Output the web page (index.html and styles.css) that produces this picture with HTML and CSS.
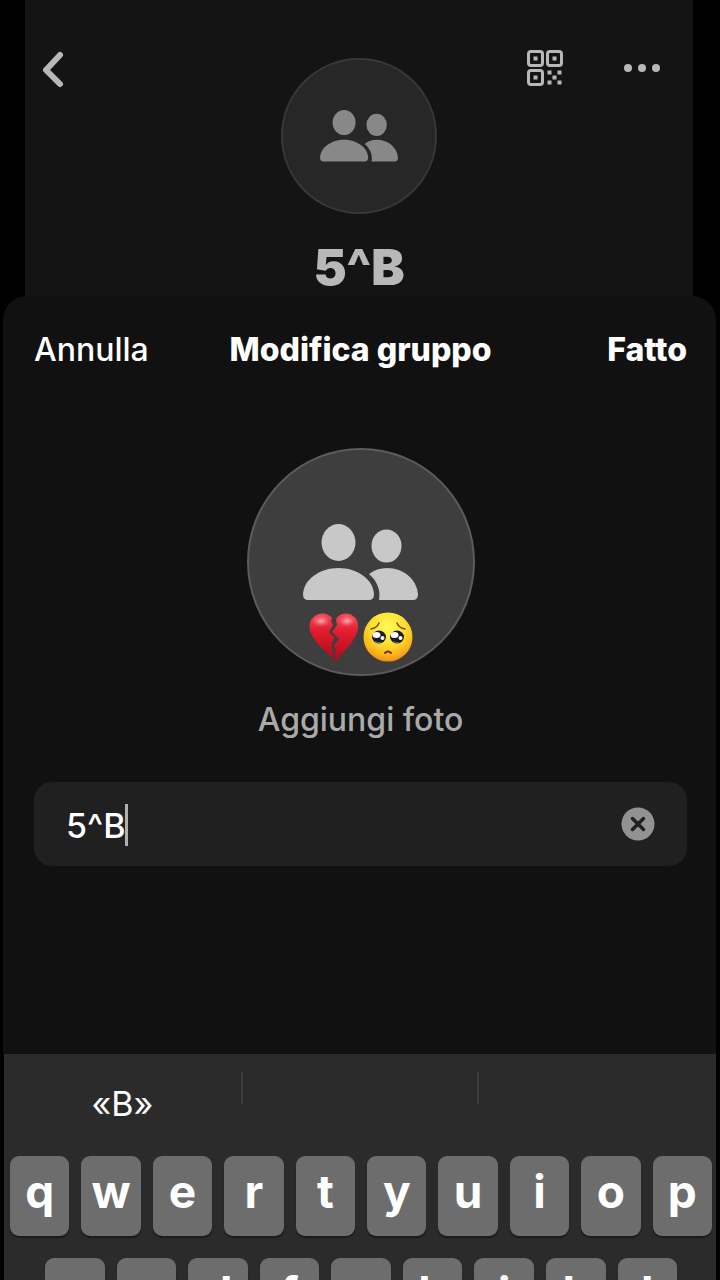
FILE: index.html
```
<!DOCTYPE html>
<html lang="it">
<head>
  <meta charset="UTF-8">
  <meta name="viewport" content="width=device-width, initial-scale=1.0">
  <title>Modifica gruppo</title>
  <link rel="stylesheet" href="styles.css">
</head>
<body>
  <!-- Group page behind the sheet -->
  <div class="group-page">
    <div class="group-header">
      <button class="icon-button" type="button" aria-label="Indietro">
        <svg width="24" height="40" viewBox="0 0 24 40"><path d="M19 5 5 20l14 14" fill="none" stroke="currentColor" stroke-width="6" stroke-linecap="round" stroke-linejoin="round"/></svg>
      </button>
      <div class="group-actions">
        <button class="icon-button" type="button" aria-label="Codice QR">
          <svg width="36" height="36" viewBox="0 0 36 36" fill="currentColor">
            <g fill="none" stroke="currentColor" stroke-width="3">
              <rect x="1.5" y="1.5" width="14" height="14" rx="2.5"/>
              <rect x="20.5" y="1.5" width="14" height="14" rx="2.5"/>
              <rect x="1.5" y="20.5" width="14" height="14" rx="2.5"/>
            </g>
            <path d="M6.500 6.500h4v4h-4zM25.500 6.500h4v4h-4zM6.500 25.500h4v4h-4zM20.500 20.500h4v4h-4zM30.500 20.500h4v4h-4zM25.500 25.500h4v4h-4zM20.500 30.500h4v4h-4zM30.500 30.500h4v4h-4z"/>
          </svg>
        </button>
        <button class="icon-button" type="button" aria-label="Altro">
          <svg width="36" height="36" viewBox="0 0 36 36" fill="currentColor"><circle cx="4" cy="18" r="4"/><circle cx="18" cy="18" r="4"/><circle cx="32" cy="18" r="4"/></svg>
        </button>
      </div>
    </div>
    <div class="group-avatar">
      <svg class="people" viewBox="0 0 115 76" fill="currentColor">
        <ellipse cx="35.500" cy="18.500" rx="17" ry="18.500"/>
        <ellipse cx="83.500" cy="22" rx="15" ry="16.500"/>
        <path d="M5 76Q0 76 0 70C1 55 17 44 35.500 44S70 55 71 70Q71 76 66 76Z"/>
        <path d="M66 50C71 46 77 44 84 44C101 44 114 56 115 70Q115 76 110 76H76C78 66 74 57 66 50Z"/>
      </svg>
    </div>
    <h1 class="group-name">5^B</h1>
  </div>

  <!-- Edit sheet -->
  <div class="sheet">
    <div class="sheet-header">
      <button class="text-button" type="button">Annulla</button>
      <h2>Modifica gruppo</h2>
      <button class="text-button done" type="button">Fatto</button>
    </div>
    <div class="photo">
      <div class="photo-circle">
        <svg class="people" viewBox="0 0 115 76" fill="currentColor">
          <ellipse cx="35.500" cy="18.500" rx="17" ry="18.500"/>
          <ellipse cx="83.500" cy="22" rx="15" ry="16.500"/>
          <path d="M5 76Q0 76 0 70C1 55 17 44 35.500 44S70 55 71 70Q71 76 66 76Z"/>
          <path d="M66 50C71 46 77 44 84 44C101 44 114 56 115 70Q115 76 110 76H76C78 66 74 57 66 50Z"/>
        </svg>
        <div class="stickers">
          <svg width="50" height="50" viewBox="0 0 50 50" role="img" aria-label="Cuore spezzato">
            <defs>
              <linearGradient id="heart" x1="0" y1="0" x2="0" y2="1"><stop offset="0" stop-color="#f4495a"/><stop offset=".4" stop-color="#e01c2e"/><stop offset="1" stop-color="#a90c1b"/></linearGradient>
              <radialGradient id="shine"><stop offset="0" stop-color="#ffb9bd" stop-opacity=".9"/><stop offset="1" stop-color="#ff7b87" stop-opacity="0"/></radialGradient>
            </defs>
            <path d="M23 6C19 1 11 0 6 4C-1 8 -1 17 4 25C8 33 18 40 25 47C26 43 24 39 23 37L23 31L26 26L20 20L24 13L22 9Z" fill="url(#heart)"/>
            <path d="M27 7C31 1 39 0 44 4C51 8 50 18 46 25C42 33 34 41 26 50C25 47 27 42 27 39L25 33L30 27L23 20L28 13Z" fill="url(#heart)"/>
            <ellipse cx="12" cy="9" rx="9" ry="6" fill="url(#shine)"/>
            <ellipse cx="38" cy="9" rx="9" ry="6" fill="url(#shine)"/>
          </svg>
          <svg width="50" height="50" viewBox="0 0 50 50" role="img" aria-label="Faccina supplichevole">
            <defs>
              <radialGradient id="face" cx=".5" cy=".3" r=".7"><stop offset="0" stop-color="#fff95e"/><stop offset=".5" stop-color="#ffe02f"/><stop offset=".85" stop-color="#fbae18"/><stop offset="1" stop-color="#ee8d10"/></radialGradient>
            </defs>
            <circle cx="25" cy="25" r="24.500" fill="url(#face)"/>
            <path d="M8 17Q14 16 16 11M34 11Q36 16 42 17" fill="none" stroke="#7a4a0a" stroke-width="1.500" stroke-linecap="round"/>
            <ellipse cx="16" cy="25" rx="7" ry="6.500" fill="#1c1a22"/>
            <ellipse cx="34" cy="25" rx="7" ry="6.500" fill="#1c1a22"/>
            <g fill="#fff">
              <ellipse cx="13.500" cy="23" rx="4" ry="3"/><circle cx="19.500" cy="26" r="2"/>
              <ellipse cx="31.500" cy="23" rx="4" ry="3"/><circle cx="37.500" cy="26" r="2"/>
            </g>
            <path d="M12 29.500q3 2 6 1M30 29.500q3 2 6 1" fill="none" stroke="#5d74a8"/>
            <path d="M22 41Q25 38 28 41" fill="none" stroke="#6b2d0c" stroke-width="2" stroke-linecap="round"/>
          </svg>
        </div>
      </div>
      <button class="text-button add-photo" type="button">Aggiungi foto</button>
    </div>
    <div class="name-field">
      <input type="text" value="5^B" aria-label="Nome del gruppo">
      <span class="caret"></span>
      <button class="icon-button" type="button" aria-label="Cancella testo">
        <svg width="34" height="34" viewBox="0 0 34 34"><circle cx="17" cy="17" r="16.500" fill="#929292"/><path d="m11.500 11.500 11 11m0-11-11 11" stroke="#202020" stroke-width="3.500" stroke-linecap="round"/></svg>
      </button>
    </div>
  </div>

  <!-- Keyboard -->
  <div class="keyboard">
    <div class="suggestions">
      <button type="button">«B»</button>
      <button type="button" aria-label="Suggerimento 2"></button>
      <button type="button" aria-label="Suggerimento 3"></button>
    </div>
    <div class="keys">
      <button type="button">q</button>
      <button type="button">w</button>
      <button type="button">e</button>
      <button type="button">r</button>
      <button type="button">t</button>
      <button type="button">y</button>
      <button type="button">u</button>
      <button type="button">i</button>
      <button type="button">o</button>
      <button type="button">p</button>
    </div>
    <div class="keys keys-middle">
      <button type="button">a</button>
      <button type="button">s</button>
      <button type="button">d</button>
      <button type="button">f</button>
      <button type="button">g</button>
      <button type="button">h</button>
      <button type="button">j</button>
      <button type="button">k</button>
      <button type="button">l</button>
    </div>
  </div>
</body>
</html>
```
FILE: styles.css
```
/* General Styles */
* {
  box-sizing: border-box;
}

body {
  margin: 0;
  height: 100vh;
  overflow: hidden;
  display: flex;
  flex-direction: column;
  background-color: #000;
  color: #fff;
  font-family: Inter, "Liberation Sans", sans-serif;
  font-size: 32px;
  font-weight: 500;
}

button {
  margin: 0;
  padding: 0;
  border: none;
  background: none;
  color: inherit;
  font: inherit;
  cursor: pointer;
}

svg {
  display: block;
}

h1,
h2 {
  margin: 0;
}

/* Group page */
.group-page {
  flex: none;
  margin: 0 27px 0 25px;
  padding-top: 48px;
  background-color: #141414;
  color: #b8b8b8;
  display: grid;
  grid-template-columns: 1fr;
  justify-items: center;
}

.group-header {
  grid-area: 1 / 1;
  justify-self: stretch;
  display: flex;
  justify-content: space-between;
  align-items: flex-start;
  padding: 2px 33px 0 16px;
}

.group-actions {
  display: flex;
  gap: 61px;
}

.group-avatar {
  grid-area: 1 / 1;
  width: 156px;
  height: 156px;
  margin-top: 10px;
  border: 2px solid #383838;
  border-radius: 50%;
  background-color: #272727;
  color: #888;
  display: flex;
  align-items: center;
  justify-content: center;
}

.group-avatar .people {
  width: 78px;
}

.group-name {
  padding: 24px 0 0;
  font-size: 50px;
  line-height: 58px;
  font-weight: 900;
}

/* Sheet */
.sheet {
  flex: 1;
  margin: 0 4px 0 3px;
  padding: 34px 29px 0 31px;
  border-radius: 24px 24px 0 0;
  background-color: #111;
}

.sheet-header {
  display: grid;
  grid-template-columns: 1fr auto 1fr;
  align-items: center;
  line-height: 40px;
}

.sheet-header h2 {
  font-size: 32px;
  font-weight: 800;
}

.text-button {
  justify-self: start;
}

.done {
  justify-self: end;
  font-weight: 800;
}

.photo {
  display: flex;
  flex-direction: column;
  align-items: center;
  margin-top: 78px;
}

.photo-circle {
  width: 228px;
  height: 228px;
  padding-top: 74px;
  border: 2px solid #5c5c5c;
  border-radius: 50%;
  background-color: #3e3e3e;
  color: #c8c8c8;
  display: flex;
  flex-direction: column;
  align-items: center;
  gap: 12px;
}

.photo-circle .people {
  width: 115px;
}

.stickers {
  display: flex;
  gap: 4px;
}

.add-photo {
  align-self: center;
  margin-top: 24px;
  color: #aaa;
  line-height: 40px;
}

.name-field {
  position: relative;
  display: flex;
  align-items: center;
  height: 84px;
  margin-top: 42px;
  padding: 0 32px;
  border-radius: 18px;
  background-color: #202020;
}

.name-field input {
  flex: 1;
  min-width: 0;
  padding: 2px 0 0;
  border: none;
  outline: none;
  background: none;
  color: #fff;
  caret-color: transparent;
  font: inherit;
  font-size: 34px;
}

.caret {
  position: absolute;
  left: 91px;
  top: 22px;
  width: 3px;
  height: 42px;
  background-color: #b0b0b0;
}

/* Keyboard */
.keyboard {
  flex: none;
  height: 226px;
  margin: 0 4px;
  overflow: hidden;
  background-color: #2b2b2b;
}

.suggestions {
  display: grid;
  grid-template-columns: repeat(3, 1fr);
  height: 102px;
  padding: 18px 2px 0 0;
}

.suggestions button {
  height: 32px;
  padding-top: 32px;
  font-size: 34px;
  font-weight: 400;
  line-height: 0;
}

.suggestions button + button {
  border-left: 2px solid #3d3d3d;
}

.keys {
  display: flex;
  gap: 12px;
  padding: 0 4px 0 6px;
}

.keys-middle {
  margin-top: 22px;
  padding: 0 39px 0 41px;
}

.keys button {
  flex: 1;
  height: 80px;
  padding-bottom: 10px;
  border-radius: 9px;
  background-color: #6d6d6d;
  box-shadow: 0 2px 1px #1b1b1b;
  font-size: 46px;
  font-weight: 700;
}
```
